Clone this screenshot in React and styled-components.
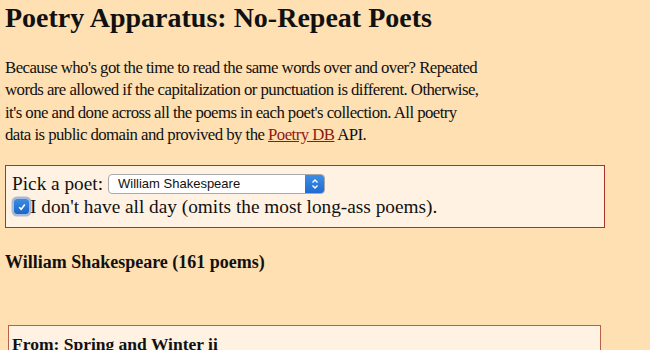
import React from "react";
import styled, { createGlobalStyle } from "styled-components";

const GlobalStyle = createGlobalStyle`
  html, body {
    margin: 0;
    background: #ffe0b2;
  }
  body {
    padding: 0 5px;
    font-family: "Liberation Serif", "Times New Roman", serif;
    color: #111;
  }
`;

const Page = styled.main`
  display: flex;
  flex-direction: column;
`;

const Title = styled.h1`
  margin: 2px 0 0;
  font-size: 28px;
  line-height: 32px;
  font-weight: bold;
`;

const Intro = styled.p`
  margin: 23px 0 0;
  max-width: 484px;
  font-size: 16.8px;
  letter-spacing: -0.55px;
  line-height: 22.3px;
`;

const Link = styled.a`
  color: #8e1a14;
  text-decoration: underline;
`;

const Controls = styled.form`
  margin-top: 19px;
  width: 600px;
  box-sizing: border-box;
  padding: 6px 6px 9px;
  background: #fff2e3;
  border: 1.5px solid #a8342c;
  display: flex;
  flex-direction: column;
  font-size: 19.3px;
`;

const Row = styled.label`
  display: flex;
  align-items: center;
  gap: ${(p) => (p.$tight ? "1px" : "5px")};
  line-height: 23px;
`;

const SelectBox = styled.div`
  width: 217px;
  height: 20px;
  box-sizing: border-box;
  border: 1px solid #a9a9a9;
  border-radius: 4px;
  background: #fff;
  display: flex;
  align-items: center;
  overflow: hidden;
`;

const Select = styled.select`
  appearance: none;
  border: none;
  background: transparent;
  flex: 1;
  height: 100%;
  padding: 0 0 0 9px;
  font-family: "Liberation Sans", Arial, sans-serif;
  font-size: 13px;
  color: #111;
  outline: none;
`;

const Arrow = styled.span`
  width: 19px;
  height: 100%;
  background: linear-gradient(#3d8ee6, #1f6bd0);
  display: flex;
  align-items: center;
  justify-content: center;
  pointer-events: none;
`;

const Check = styled.span`
  width: 15px;
  height: 15px;
  border-radius: 3px;
  background: linear-gradient(#3b8de4, #1c64c6);
  box-shadow: 0 0 0 2.5px rgba(60, 120, 200, 0.45);
  display: flex;
  align-items: center;
  justify-content: center;
  margin-left: 2px;
  flex-shrink: 0;
`;

const Heading = styled.h2`
  margin: 23px 0 0;
  font-size: 18px;
  line-height: 22px;
  font-weight: bold;
`;

const Poem = styled.section`
  margin: 52px 0 0 3px;
  width: 593px;
  box-sizing: border-box;
  padding: 8px 3px;
  background: #fff2e3;
  border: 1.5px solid #b6614a;
  height: 60px;
`;

const PoemTitle = styled.h3`
  margin: 0;
  font-size: 17.5px;
  font-weight: bold;
`;

export default function App() {
  return (
    <>
      <GlobalStyle />
      <Page>
        <Title>Poetry Apparatus: No-Repeat Poets</Title>
        <Intro>
          Because who's got the time to read the same words over and over?
          Repeated words are allowed if the capitalization or punctuation is
          different. Otherwise, it's one and done across all the poems in each
          poet's collection. All poetry
          <br />
          data is public domain and provived by the{" "}
          <Link href="#">Poetry DB</Link> API.
        </Intro>
        <Controls>
          <Row>
            Pick a poet:
            <SelectBox>
              <Select defaultValue="William Shakespeare">
                <option>William Shakespeare</option>
              </Select>
              <Arrow>
                <svg width="8" height="12" viewBox="0 0 8 12">
                  <path d="M1.5 4.5 L4 2 L6.5 4.5 M1.5 7.5 L4 10 L6.5 7.5" fill="none" stroke="#fff" strokeWidth="1.4" />
                </svg>
              </Arrow>
            </SelectBox>
          </Row>
          <Row $tight>
            <Check>
              <svg width="10" height="10" viewBox="0 0 10 10">
                <path d="M2.2 5.3 L4.2 7.3 L7.8 2.6" fill="none" stroke="#fff" strokeWidth="1.6" />
              </svg>
            </Check>
            I don't have all day (omits the most long-ass poems).
          </Row>
        </Controls>
        <Heading>William Shakespeare (161 poems)</Heading>
        <Poem>
          <PoemTitle>From: Spring and Winter ii</PoemTitle>
        </Poem>
      </Page>
    </>
  );
}
